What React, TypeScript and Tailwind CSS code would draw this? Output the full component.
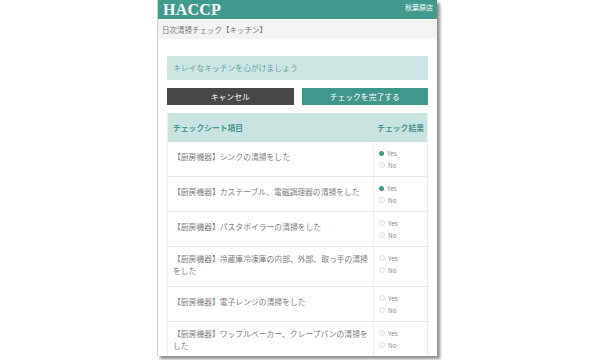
import React from "react";

const rows: { text: string; yes: boolean }[] = [
  { text: "【厨房機器】シンクの清掃をした", yes: true },
  { text: "【厨房機器】カステーブル、電磁調理器の清掃をした", yes: true },
  { text: "【厨房機器】パスタボイラーの清掃をした", yes: false },
  { text: "【厨房機器】冷蔵庫冷凍庫の内部、外部、取っ手の清掃をした", yes: false },
  { text: "【厨房機器】電子レンジの清掃をした", yes: false },
  { text: "【厨房機器】ワッフルベーカー、クレープパンの清掃をした", yes: false },
];

function Radio({ on }: { on: boolean }) {
  return on ? (
    <span className="inline-block w-[5px] h-[5px] rounded-full bg-[#3f978c]" />
  ) : (
    <span className="inline-block w-[6px] h-[6px] rounded-full border border-[#dcdcdc] bg-white" />
  );
}

export default function App() {
  const jp = { fontFamily: '"Noto Sans CJK JP", "Noto Sans", sans-serif' };
  return (
    <div className="w-[600px] h-[360px] bg-white overflow-hidden" style={jp}>
      <div className="ml-[157px] w-[280px] h-[356px] border-l border-[#cfcfcf] bg-white overflow-hidden shadow-[3px_3px_3px_rgba(0,0,0,0.45)] flex flex-col">
        <div className="h-[19px] bg-[#429a8e] flex items-center justify-between pl-[5px] pr-[4px] shrink-0">
          <span
            className="text-white font-bold text-[16px] leading-none tracking-[0.2px]"
            style={{ fontFamily: '"Liberation Serif", serif' }}
          >
            HACCP
          </span>
          <span className="text-white text-[7px] leading-none mt-[-4px]">秋葉原店</span>
        </div>
        <div className="h-[19px] mt-[1px] bg-[#f3f3f3] flex items-center pl-[4px] text-[7.5px] text-[#777] shrink-0">
          日次清掃チェック【キッチン】
        </div>
        <div className="px-[9px] pt-[17px]">
          <div className="h-[24px] bg-[#cde6e3] flex items-center pl-[6px] text-[7.8px] text-[#62a79d]">
            キレイなキッチンを心がけましょう
          </div>
          <div className="mt-[8px] flex gap-[8px]">
            <div className="flex-1 h-[17px] bg-[#474747] text-white text-[7.8px] flex items-center justify-center">
              キャンセル
            </div>
            <div className="flex-1 h-[17px] bg-[#3f978c] text-white text-[7.8px] flex items-center justify-center">
              チェックを完了する
            </div>
          </div>
          <div className="mt-[8px] border-x border-[#eeeeee]">
            <div className="h-[29px] bg-[#c9e3e0] flex items-center text-[7.8px] font-semibold text-[#4a978d]">
              <div className="w-[206px] pl-[5px]">チェックシート項目</div>
              <div className="flex-1 text-right pr-[3px]">チェック結果</div>
            </div>
            {rows.map((r, i) => {
              const wrap = i === 3 || i === 5;
              return (
                <div key={i} className="flex border-b border-[#e8e8e8]">
                  <div
                    className={
                      wrap
                        ? "w-[206px] pl-[5px] pr-[4px] pt-[6px] pb-[9px] text-[7.8px] leading-[12px] text-[#7a7a7a] border-r border-[#efefef]"
                        : "w-[206px] pl-[5px] pr-[4px] pt-[8px] pb-[7px] flex items-center text-[7.8px] leading-[12px] text-[#7a7a7a] border-r border-[#efefef]"
                    }
                  >
                    <span className={wrap ? "" : "-mt-[5px]"}>{r.text}</span>
                  </div>
                  <div className="flex-1 pl-[5px] pt-[5px] pb-[5px] text-[6.5px] text-[#888] leading-[12px]">
                    <div className="flex items-center gap-[3px]">
                      <Radio on={r.yes} />
                      <span>Yes</span>
                    </div>
                    <div className="flex items-center gap-[3px]">
                      <Radio on={false} />
                      <span>No</span>
                    </div>
                  </div>
                </div>
              );
            })}
          </div>
        </div>
      </div>
    </div>
  );
}
